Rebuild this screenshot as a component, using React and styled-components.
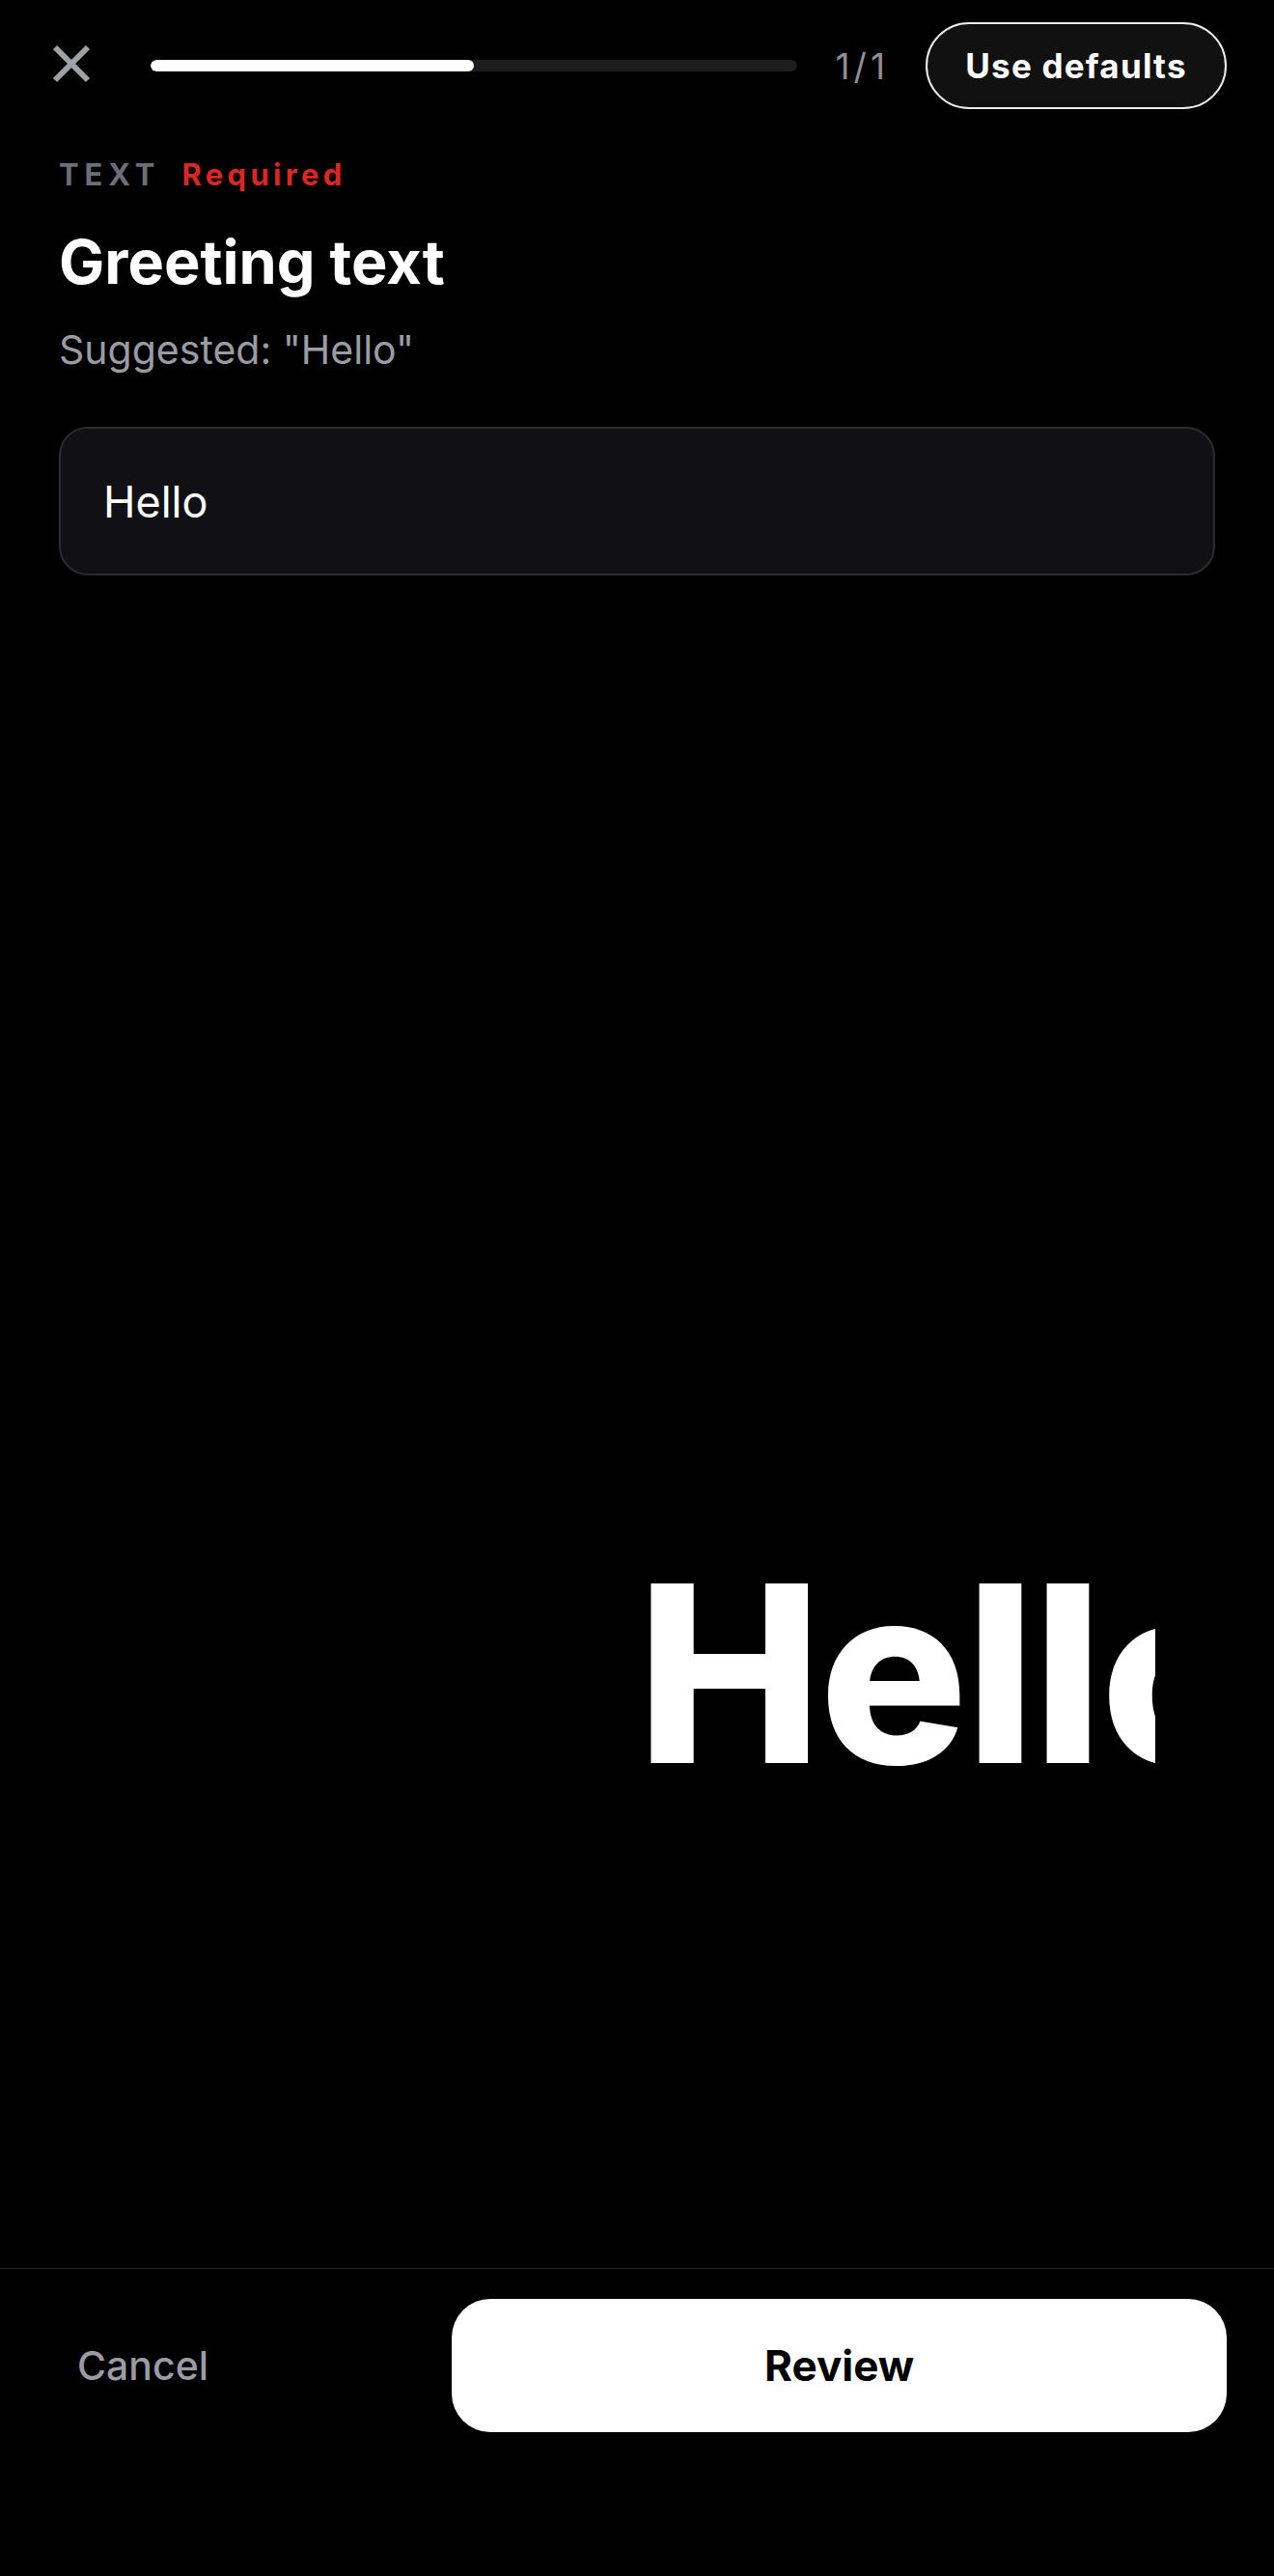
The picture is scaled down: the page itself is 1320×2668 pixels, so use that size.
import React, { useState } from "react"
import styled, { createGlobalStyle } from "styled-components"

const GlobalStyle = createGlobalStyle`
  html, body {
    margin: 0;
    padding: 0;
    background: #000;
  }

  body {
    font-family: Inter, "Noto Sans", "Liberation Sans", sans-serif;
    color: #fff;
  }

  * {
    box-sizing: border-box;
  }
`

const CloseIcon = () => (
  <svg width="40" height="40" viewBox="0 0 40 40" fill="none">
    <path d="M3 3L37 37M37 3L3 37" stroke="#a0a1a8" strokeWidth="6" />
  </svg>
)

const App = () => {
  const [value, setValue] = useState("Hello")
  const step = 1
  const total = 1

  return (
    <Screen>
      <GlobalStyle />
      <TopBar>
        <CloseButton aria-label="Close">
          <CloseIcon />
        </CloseButton>
        <Track>
          <TrackFill style={{ width: "50%" }} />
        </Track>
        <StepCount>
          {step}/{total}
        </StepCount>
        <DefaultsButton>Use defaults</DefaultsButton>
      </TopBar>

      <Content>
        <LabelRow>
          <Kind>TEXT</Kind>
          <Required>Required</Required>
        </LabelRow>
        <Title>Greeting text</Title>
        <Hint>Suggested: "Hello"</Hint>
        <Field value={value} onChange={(e) => setValue(e.target.value)} />
      </Content>

      {/* preview draws the text from the centre line, clipped at the canvas edge */}
      <Preview>
        <Canvas>
          <PreviewText>{value}</PreviewText>
        </Canvas>
      </Preview>

      <Footer>
        <CancelButton>Cancel</CancelButton>
        <ReviewButton>Review</ReviewButton>
      </Footer>
    </Screen>
  )
}

const Screen = styled.div`
  display: flex;
  flex-direction: column;
  min-height: 100vh;
  background: #000;
`

const TopBar = styled.div`
  display: flex;
  align-items: center;
  padding: 23px 49px 0 54px;
  height: 113px;
`

const CloseButton = styled.button`
  display: flex;
  align-items: center;
  justify-content: center;
  width: 40px;
  height: 40px;
  padding: 0;
  margin-top: -4px;
  background: none;
  border: none;
  cursor: pointer;
`

const Track = styled.div`
  flex: 1;
  height: 12px;
  margin: 0 40px 0 62px;
  border-radius: 6px;
  background: #1c1c21;
  overflow: hidden;
`

const TrackFill = styled.div`
  height: 100%;
  border-radius: 6px;
  background: #fff;
`

const StepCount = styled.span`
  font-size: 37px;
  letter-spacing: 4px;
  color: #8e8e93;
  margin-right: 38px;
`

const DefaultsButton = styled.button`
  height: 90px;
  width: 312px;
  border-radius: 45px;
  border: 2.5px solid #ececec;
  background: #111112;
  color: #fff;
  font-family: inherit;
  font-size: 35px;
  font-weight: 700;
  letter-spacing: 0.035em;
  cursor: pointer;
`

const Content = styled.div`
  display: flex;
  flex-direction: column;
  padding: 0 61px;
`

const LabelRow = styled.div`
  display: flex;
  align-items: baseline;
  gap: 22px;
  margin-top: 49px;
  font-size: 31px;
  line-height: 38px;
  font-weight: 700;
`

const Kind = styled.span`
  color: #6b6e76;
  letter-spacing: 0.19em;
`

const Required = styled.span`
  color: #dc2626;
  letter-spacing: 0.14em;
`

const Title = styled.h1`
  margin: 36px 0 0;
  font-size: 63px;
  line-height: 70px;
  font-weight: 700;
  letter-spacing: 0;
`

const Hint = styled.p`
  margin: 31px 0 0;
  font-size: 41px;
  line-height: 50px;
  color: #9b9ca3;
`

const Field = styled.input`
  margin-top: 55px;
  height: 154px;
  width: 100%;
  padding: 0 44px;
  border: 2px solid #2b2b31;
  border-radius: 30px;
  background: #111115;
  color: #fff;
  font-family: inherit;
  font-size: 45px;
  outline: none;
`

const Preview = styled.div`
  flex: 1;
  display: flex;
  padding: 0 123px;
`

const Canvas = styled.div`
  position: relative;
  flex: 1;
  overflow: hidden;
`

const PreviewText = styled.div`
  position: absolute;
  left: 50%;
  top: 1009px;
  font-size: 256px;
  line-height: 256px;
  font-weight: 800;
  letter-spacing: -0.01em;
  white-space: nowrap;
  color: #fff;
`

const Footer = styled.div`
  display: grid;
  grid-template-columns: 1fr 2fr;
  gap: 18px;
  align-items: center;
  padding: 31px 49px 149px;
  border-top: 1px solid #222225;
`

const CancelButton = styled.button`
  justify-self: start;
  padding: 0 31px;
  background: none;
  border: none;
  color: #9b9ca3;
  font-family: inherit;
  font-size: 41px;
  font-weight: 500;
  cursor: pointer;
`

const ReviewButton = styled.button`
  height: 138px;
  border: none;
  border-radius: 40px;
  background: #fff;
  color: #000;
  font-family: inherit;
  font-size: 44px;
  font-weight: 700;
  cursor: pointer;
`

export default App
